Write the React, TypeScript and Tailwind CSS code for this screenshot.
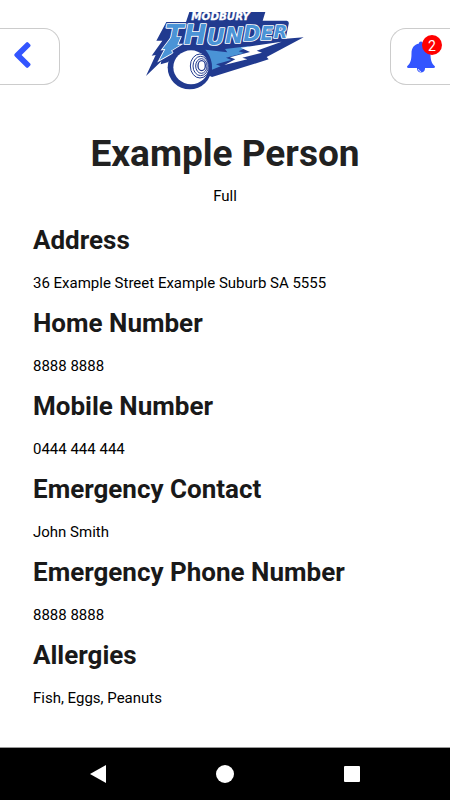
import { ReactNode } from 'react';

interface Detail {
  label: string;
  value: string;
}

const details: Detail[] = [
  { label: 'Address', value: '36 Example Street Example Suburb SA 5555' },
  { label: 'Home Number', value: '8888 8888' },
  { label: 'Mobile Number', value: '0444 444 444' },
  { label: 'Emergency Contact', value: 'John Smith' },
  { label: 'Emergency Phone Number', value: '8888 8888' },
  { label: 'Allergies', value: 'Fish, Eggs, Peanuts' },
];

const BOLT = 'M95 96H122L112 119H122L93 137L98 143L58 166L76 132L67 133Z';

const Logo = () => (
  <svg
    className="w-[170px] h-[90px]"
    viewBox="0 0 510 270"
    role="img"
    aria-label="Modbury Thunder"
  >
    {/* badge and lightning tail */}
    <path
      fill="#213a8f"
      d="M148 21H376L368 47H440Q448 48 446 57L437 101L491 97L380 156L386 163L216 216L100 160L83 172L62 178L64 169L18 213L47 150L35 152L67 107H49L79 51H138Z"
    />
    <path
      fill="#4a93d6"
      d="M196 134L262 142L255 132L330 123L296 139L312 144L258 158L274 165L228 178L242 184L216 194C217 170 211 151 196 134Z"
    />
    <path
      fill="#fff"
      d="M302 128L425 110L350 137L366 143L307 158L322 163L253 180L286 163L270 157L330 141Z"
    />
    {/* lightning bolt that runs down from the T */}
    <path d={BOLT} fill="none" stroke="#fff" strokeWidth="5" />
    <text
      x="75"
      y="118"
      fill="#4a93d6"
      stroke="#fff"
      strokeWidth="5"
      paintOrder="stroke"
      strokeLinejoin="round"
      fontFamily="'DejaVu Sans', Verdana, sans-serif"
      fontWeight="700"
      fontStyle="italic"
    >
      <tspan fontSize="82">TH</tspan>
      <tspan fontSize="68" dy="2">U</tspan>
      <tspan fontSize="66" dy="-5">N</tspan>
      <tspan fontSize="62" dy="-6">D</tspan>
      <tspan fontSize="57" dy="-5">E</tspan>
      <tspan fontSize="54" dy="-5">R</tspan>
    </text>
    <path d={BOLT} fill="#4a93d6" />
    <text
      x="154"
      y="46"
      fill="#fff"
      stroke="#fff"
      strokeWidth="1"
      fontFamily="'DejaVu Sans', Verdana, sans-serif"
      fontSize="31"
      fontWeight="700"
      fontStyle="italic"
    >
      MODBURY
    </text>
    {/* bowl */}
    <circle cx="149" cy="187" r="66" fill="#213a8f" />
    <ellipse cx="153" cy="187" rx="53" ry="51" fill="#fff" />
    <g fill="none" stroke="#213a8f" strokeWidth="3">
      <ellipse cx="180" cy="183" rx="29" ry="36" />
      <ellipse cx="182" cy="183" rx="23" ry="29" />
      <ellipse cx="184" cy="183" rx="17" ry="22" />
      <ellipse cx="185" cy="182" rx="11" ry="15" strokeWidth="4" />
    </g>
  </svg>
);

const BackIcon = () => (
  <svg className="w-5 h-7" viewBox="0 0 20 28" aria-hidden="true">
    <path
      d="M3 12.600L14.200 1.400Q15.200 0.500 16.200 1.400L18.200 3.400Q19.100 4.400 18.200 5.400L9.600 14L18.200 22.600Q19.100 23.600 18.200 24.600L16.200 26.600Q15.200 27.500 14.200 26.600L3 15.400Q1.200 14 3 12.600Z"
      fill="#3355ff"
    />
  </svg>
);

const BellIcon = () => (
  <svg className="w-7 h-8" viewBox="0 0 28 32" aria-hidden="true">
    <path
      fill="#3355ff"
      d="M14 0.500C15.300 0.500 16 1.300 16 2.500C21 3.500 23.500 7 23.500 12.500C23.500 19.500 24.800 22.500 28 25.500Q28 27 26.500 27H18C18.500 33 9.500 33 10 27H1.500Q0 27 0 25.500C3.200 22.500 4.500 19.500 4.500 12.500C4.500 7 7 3.500 12 2.500C12 1.300 12.700 0.500 14 0.500Z"
    />
    <path d="M11.500 28C11.500 29.500 12.500 30.500 14 30.500" fill="none" stroke="#fff" strokeWidth="0.800" />
  </svg>
);

interface NavButtonProps {
  label: string;
  children: ReactNode;
}

const NavButton = ({ label, children }: NavButtonProps) => (
  <button type="button" aria-label={label} className="flex h-7 w-7 items-center justify-center">
    {children}
  </button>
);

const App = () => (
  <div className="flex min-h-screen flex-col bg-white font-[Roboto,sans-serif] text-black">
    <header className="flex items-start justify-between">
      <button
        type="button"
        aria-label="Back"
        className="mt-7 flex h-[57px] w-[60px] items-center rounded-r-2xl border border-l-0 border-[#ccc] pb-1 pl-3"
      >
        <BackIcon />
      </button>
      <div className="pt-[5px]">
        <Logo />
      </div>
      <button
        type="button"
        aria-label="Notifications, 2 unread"
        className="relative mt-7 flex h-[57px] w-[60px] items-center rounded-l-2xl border border-r-0 border-[#ccc] pl-4"
      >
        <BellIcon />
        <span className="absolute right-2 top-1.5 flex h-5 w-5 items-center justify-center rounded-full bg-[#f00] pt-0.5 text-sm text-white">
          2
        </span>
      </button>
    </header>

    <main className="flex-1 px-[33px] pt-[33px]">
      <h1 className="text-center text-[37px] font-bold leading-[52px] text-[#212121]">
        Example Person
      </h1>
      <p className="mt-1 text-center text-[15px] leading-6">Full</p>

      <div className="mt-4 flex flex-col gap-3">
        {details.map(({ label, value }) => (
          <section key={label}>
            <h2 className="text-[26px] font-bold leading-8 text-[#191919]">{label}</h2>
            <p className="mt-[15px] text-[15px] leading-6">{value}</p>
          </section>
        ))}
      </div>
    </main>

    <nav className="flex h-[53px] items-center justify-around border-t border-[#999] bg-black px-[35px]">
      <NavButton label="Back">
        <svg className="w-5 h-5" viewBox="0 0 20 20" aria-hidden="true">
          <path d="M2 10L18 1V19Z" fill="#fff" />
        </svg>
      </NavButton>
      <NavButton label="Home">
        <span className="h-[18px] w-[18px] rounded-full bg-white" />
      </NavButton>
      <NavButton label="Recent apps">
        <span className="h-4 w-4 rounded-[1px] bg-white" />
      </NavButton>
    </nav>
  </div>
);

export default App;
